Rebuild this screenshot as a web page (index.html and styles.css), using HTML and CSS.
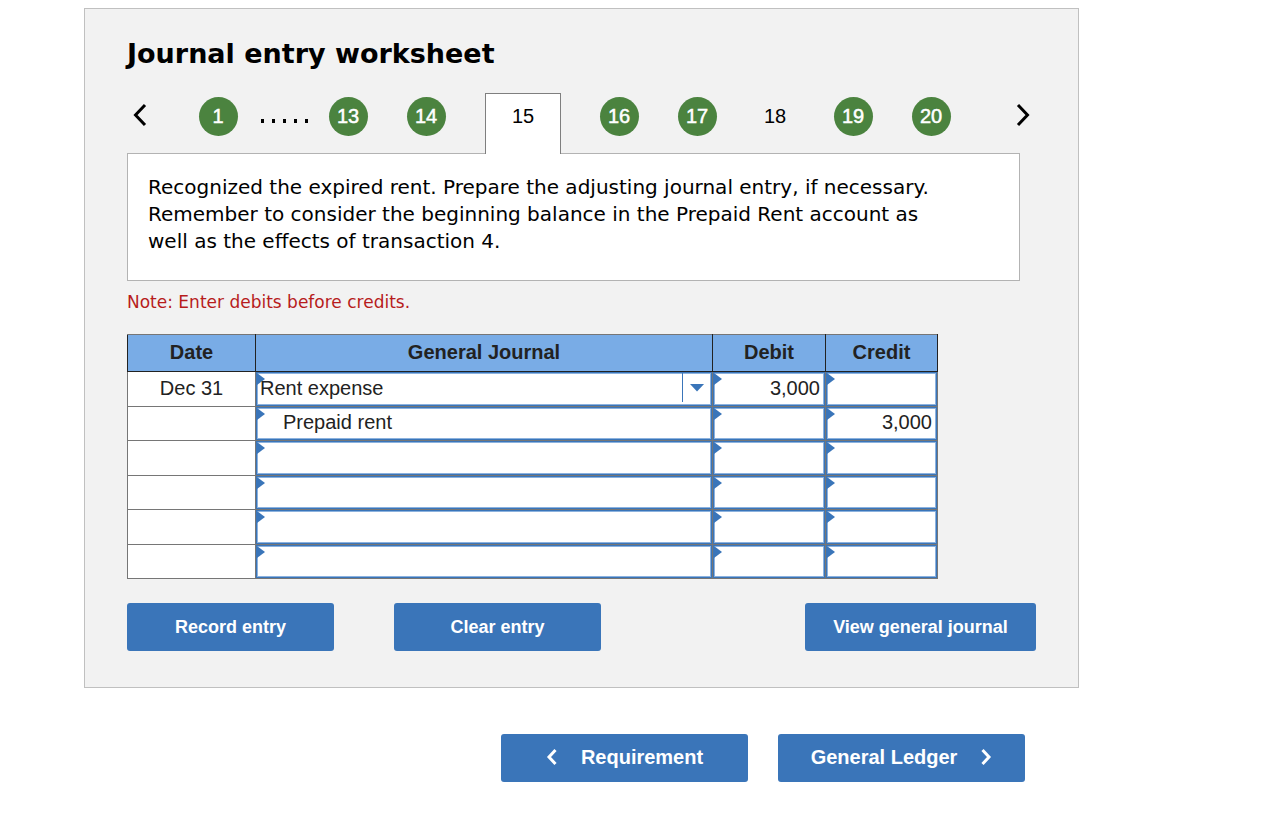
FILE: index.html
```html
<!DOCTYPE html>
<html lang="en">
<head>
<meta charset="utf-8">
<meta name="viewport" content="width=device-width, initial-scale=1">
<title>Journal entry worksheet</title>
<link rel="stylesheet" href="styles.css">
</head>
<body>
<main class="page">
  <section class="panel">
    <h1 class="title">Journal entry worksheet</h1>

    <nav class="steps" aria-label="Worksheet entries">
      <button class="arrow arrow-prev" type="button" aria-label="Previous entries">
        <svg width="14" height="24" viewBox="0 0 14 24"><path d="M12 2 2.500 12 12 22" /></svg>
      </button>
      <div class="slot"><button class="step done" type="button">1</button></div>
      <span class="dots" aria-hidden="true"><i></i><i></i><i></i><i></i><i></i></span>
      <div class="slot"><button class="step done" type="button">13</button></div>
      <div class="slot"><button class="step done" type="button">14</button></div>
      <button class="tab" type="button" aria-current="step">15</button>
      <div class="slot"><button class="step done" type="button">16</button></div>
      <div class="slot"><button class="step done" type="button">17</button></div>
      <div class="slot"><button class="step" type="button">18</button></div>
      <div class="slot"><button class="step done" type="button">19</button></div>
      <div class="slot"><button class="step done" type="button">20</button></div>
      <button class="arrow arrow-next" type="button" aria-label="Next entries">
        <svg width="14" height="24" viewBox="0 0 14 24"><path d="M2 2 11.500 12 2 22" /></svg>
      </button>
    </nav>

    <p class="prompt">Recognized the expired rent. Prepare the adjusting journal entry, if necessary. Remember to consider the beginning balance in the Prepaid Rent account as well as the effects of transaction 4.</p>
    <p class="note">Note: Enter debits before credits.</p>

    <table class="journal">
      <colgroup><col class="col-date"><col class="col-account"><col class="col-debit"><col class="col-credit"></colgroup>
      <thead>
        <tr><th scope="col">Date</th><th scope="col">General Journal</th><th scope="col">Debit</th><th scope="col">Credit</th></tr>
      </thead>
      <tbody>
        <tr>
          <td class="date">Dec 31</td>
          <td class="entry"><div class="field picker"><select aria-label="Account, line 1"><option>Rent expense</option></select><span class="toggle"></span></div></td>
          <td class="entry"><div class="field amount"><input type="text" value="3,000" aria-label="Debit, line 1"></div></td>
          <td class="entry"><div class="field amount"><input type="text" aria-label="Credit, line 1"></div></td>
        </tr>
        <tr>
          <td class="date"></td>
          <td class="entry"><div class="field indent"><input type="text" value="Prepaid rent" aria-label="Account, line 2"></div></td>
          <td class="entry"><div class="field amount"><input type="text" aria-label="Debit, line 2"></div></td>
          <td class="entry"><div class="field amount"><input type="text" value="3,000" aria-label="Credit, line 2"></div></td>
        </tr>
        <tr>
          <td class="date"></td>
          <td class="entry"><div class="field"><input type="text" aria-label="Account, line 3"></div></td>
          <td class="entry"><div class="field amount"><input type="text" aria-label="Debit, line 3"></div></td>
          <td class="entry"><div class="field amount"><input type="text" aria-label="Credit, line 3"></div></td>
        </tr>
        <tr>
          <td class="date"></td>
          <td class="entry"><div class="field"><input type="text" aria-label="Account, line 4"></div></td>
          <td class="entry"><div class="field amount"><input type="text" aria-label="Debit, line 4"></div></td>
          <td class="entry"><div class="field amount"><input type="text" aria-label="Credit, line 4"></div></td>
        </tr>
        <tr>
          <td class="date"></td>
          <td class="entry"><div class="field"><input type="text" aria-label="Account, line 5"></div></td>
          <td class="entry"><div class="field amount"><input type="text" aria-label="Debit, line 5"></div></td>
          <td class="entry"><div class="field amount"><input type="text" aria-label="Credit, line 5"></div></td>
        </tr>
        <tr>
          <td class="date"></td>
          <td class="entry"><div class="field"><input type="text" aria-label="Account, line 6"></div></td>
          <td class="entry"><div class="field amount"><input type="text" aria-label="Debit, line 6"></div></td>
          <td class="entry"><div class="field amount"><input type="text" aria-label="Credit, line 6"></div></td>
        </tr>
      </tbody>
    </table>

    <div class="actions">
      <button class="btn" type="button">Record entry</button>
      <button class="btn" type="button">Clear entry</button>
      <button class="btn btn-view" type="button">View general journal</button>
    </div>
  </section>

  <nav class="pager" aria-label="Worksheet sections">
    <a class="pager-link" href="#requirement"><svg width="12" height="18" viewBox="0 0 12 18"><path d="M9.500 2 3 9l6.500 7" /></svg>Requirement</a>
    <a class="pager-link" href="#general-ledger">General Ledger<svg width="12" height="18" viewBox="0 0 12 18"><path d="M2.500 2 9 9l-6.500 7" /></svg></a>
  </nav>
</main>
</body>
</html>
```

FILE: styles.css
```css
* {
  box-sizing: border-box;
}

body {
  margin: 0;
  background: #fff;
  color: #000;
  font-family: "Liberation Sans", Arial, sans-serif;
  font-size: 20px;
}

button,
input,
select {
  margin: 0;
  padding: 0;
  border: 0;
  background: none;
  color: inherit;
  font: inherit;
}

.page {
  padding: 8px 196px 36px 84px;
}

.panel {
  padding: 26px 42px 36px;
  border: 1px solid #c0c0c0;
  background: #f2f2f2;
}

.title {
  margin: 0 0 20px;
  font: bold 27px/38px Verdana, "DejaVu Sans", sans-serif;
}

.steps {
  display: flex;
  align-items: flex-start;
}

.arrow {
  flex: none;
  display: flex;
  padding: 10px 6px;
}

.arrow path,
.pager-link path {
  fill: none;
  stroke: currentColor;
  stroke-width: 3;
}

.arrow-prev {
  width: 52px;
}

.arrow-next {
  margin-left: auto;
}

.slot {
  flex: 0 1 78px;
  display: flex;
  justify-content: center;
  padding-top: 4px;
}

.step {
  width: 39px;
  height: 39px;
  padding-bottom: 1px;
  border-radius: 50%;
}

.done {
  background: #4b833f;
  color: #fff;
  -webkit-text-stroke: 0.5px #fff;
}

.dots {
  flex: none;
  display: flex;
  gap: 8px;
  width: 52px;
  padding: 26px 0 0 4px;
}

.dots i {
  width: 3px;
  height: 4px;
  background: #000;
}

.tab {
  position: relative;
  z-index: 1;
  flex: 0 1 76px;
  height: 61px;
  margin: 0 19px 0 20px;
  padding-bottom: 16px;
  border: 1px solid #7f7f7f;
  border-bottom: 0;
  background: #fff;
}

.prompt {
  margin: -1px 16px 0 0;
  padding: 20px 80px 25px 20px;
  border: 1px solid #b3b3b3;
  background: #fff;
  font: 20px/27px Verdana, "DejaVu Sans", sans-serif;
}

.note {
  margin: 10px 0 20px;
  color: #b71c1c;
  font: 17px/23px Verdana, "DejaVu Sans", sans-serif;
}

.journal {
  width: 811px;
  max-width: 100%;
  table-layout: fixed;
  border-collapse: collapse;
  color: #222;
}

.col-date {
  width: 128px;
}

.col-debit {
  width: 113px;
}

.col-credit {
  width: 112px;
}

.journal th,
.journal td {
  padding: 0;
  border: 1px solid #767676;
}

.journal th {
  height: 37px;
  padding-bottom: 2px;
  border-color: #767676 #222 #222;
  background: #79ace6;
}

.journal td {
  height: 34px;
  background: #fff;
}

.journal tr:nth-child(odd) td {
  height: 35px;
}

.journal .date {
  padding-bottom: 2px;
  text-align: center;
}

.field {
  position: relative;
  height: 33px;
  border: 1px solid #3a75b9;
  box-shadow: inset 0 0 0 1px #8cb2de;
}

tr:nth-child(odd) .field {
  height: 34px;
}

.field::before {
  content: "";
  position: absolute;
  left: 0;
  top: 0;
  width: 8px;
  height: 12px;
  background: #3a75b9;
  clip-path: polygon(0 0, 100% 50%, 0 100%);
}

.field input,
.field select {
  position: relative;
  display: block;
  width: 100%;
  height: 100%;
  padding: 0 3px 2px;
  appearance: none;
}

.indent input {
  padding-left: 26px;
}

.amount input {
  padding-right: 4px;
  text-align: right;
}

.toggle {
  position: absolute;
  top: 0;
  right: 0;
  bottom: 3px;
  display: flex;
  align-items: center;
  justify-content: center;
  width: 29px;
  border-left: 1px solid #3a75b9;
  pointer-events: none;
}

.toggle::after {
  content: "";
  width: 15px;
  height: 8px;
  background: #3a75b9;
  clip-path: polygon(0 0, 100% 0, 50% 100%);
}

.actions {
  display: flex;
  gap: 60px;
  margin-top: 24px;
}

.btn {
  flex: 0 1 207px;
  height: 48px;
  border-radius: 3px;
  background: #3a75b9;
  color: #fff;
  font-size: 18px;
  font-weight: bold;
}

.btn-view {
  flex-basis: 231px;
  margin-left: auto;
}

.pager {
  display: flex;
  justify-content: flex-end;
  gap: 30px;
  margin: 46px 54px 0 0;
}

.pager-link {
  display: flex;
  align-items: center;
  justify-content: center;
  gap: 23px;
  width: 247px;
  height: 48px;
  padding-bottom: 2px;
  border-radius: 3px;
  background: #3a75b9;
  color: #fff;
  font-weight: bold;
  text-decoration: none;
}
```
